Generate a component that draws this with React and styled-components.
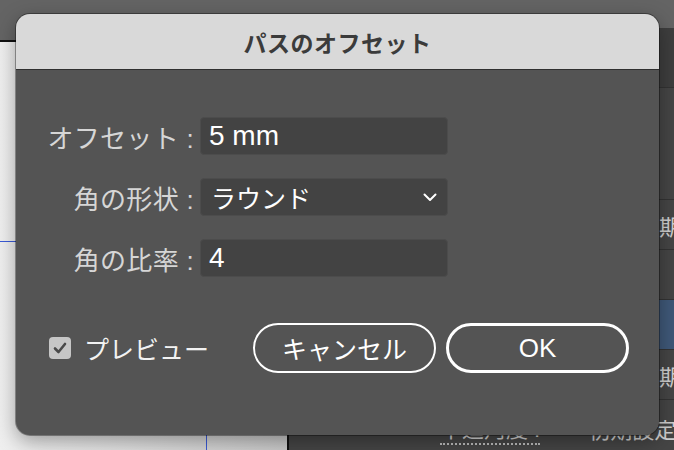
import React from "react";
import styled, { createGlobalStyle } from "styled-components";

const GlobalStyle = createGlobalStyle`
  html, body {
    margin: 0;
    padding: 0;
    background: #646464;
  }
  * {
    box-sizing: border-box;
  }
`;

const FONT = `"Liberation Sans", "Noto Sans CJK JP", sans-serif`;

const Page = styled.div`
  position: relative;
  width: 674px;
  height: 450px;
  overflow: hidden;
  background: #646464;
  font-family: ${FONT};
  display: flex;
  flex-direction: column;
`;

const TopStrip = styled.div`
  height: 40px;
  flex: none;
  background: #646464;
`;

const Workspace = styled.div`
  flex: 1;
  display: flex;
  min-width: 0;
`;

const Canvas = styled.div`
  position: relative;
  flex: none;
  width: 287px;
  border-top: 2px solid #111;
  background: linear-gradient(to right, #efefef 0%, #e2e2e2 40%, #c9c9c9 100%);
`;

const Guide = styled.div`
  position: absolute;
  background: #3b5bd6;
  ${(p) =>
    p.vertical
      ? `left: ${p.at}px; top: 0; bottom: 0; width: 1px;`
      : `top: ${p.at}px; left: 0; right: 0; height: 1px;`}
`;

const Panel = styled.div`
  flex: 1;
  min-width: 0;
  display: flex;
  flex-direction: column;
  margin-top: -12px;
  background: #3c3c3c;
  border-left: 2px solid #111;
`;

const PanelRow = styled.div`
  height: ${(p) => p.h}px;
  flex: none;
  display: flex;
  align-items: center;
  padding-left: ${(p) => p.pad || 370}px;
  gap: 48px;
  background: ${(p) => p.bg || "#454545"};
  border-bottom: 1px solid #333;
  color: #cfcfcf;
  font-size: 22px;
  white-space: nowrap;
`;

const Dotted = styled.span`
  border-bottom: 2px dotted #bbb;
`;

const Dialog = styled.div`
  position: absolute;
  left: 16px;
  top: 14px;
  width: 643px;
  height: 421px;
  border-radius: 14px;
  overflow: hidden;
  background: #545454;
  box-shadow: 0 0 0 1px rgba(0, 0, 0, 0.35), 0 6px 20px rgba(0, 0, 0, 0.35);
  display: flex;
  flex-direction: column;
`;

const TitleBar = styled.div`
  height: 56px;
  flex: none;
  display: flex;
  align-items: center;
  justify-content: center;
  background: #d9d9d9;
  border-bottom: 1px solid #2f2f2f;
  color: #3b3b3b;
  font-size: 23px;
  font-weight: 700;
  letter-spacing: 0.5px;
`;

const Body = styled.div`
  flex: 1;
  display: flex;
  flex-direction: column;
  padding: 47px 30px 60px 0;
`;

const Form = styled.div`
  display: grid;
  grid-template-columns: 178px 248px;
  column-gap: 6px;
  row-gap: 23px;
  align-items: center;
`;

const Label = styled.div`
  text-align: right;
  color: #d6d6d6;
  font-size: 26px;
  letter-spacing: 0.3px;
  white-space: nowrap;
`;

const Field = styled.div`
  height: 38px;
  display: flex;
  align-items: center;
  justify-content: space-between;
  padding: 0 10px 0 ${(p) => (p.select ? 10 : 8)}px;
  background: #434343;
  border: 1px solid #4c4c4c;
  border-radius: 4px;
  color: #ffffff;
  font-size: ${(p) => (p.select ? 25 : 28)}px;
`;

const Footer = styled.div`
  margin-top: 46px;
  display: flex;
  align-items: center;
`;

const PreviewToggle = styled.label`
  display: flex;
  align-items: center;
  gap: 13px;
  margin-left: 33px;
  color: #f2f2f2;
  font-size: 25px;
`;

const Box = styled.span`
  width: 22px;
  height: 22px;
  border-radius: 4px;
  background: #c6c6c6;
  display: flex;
  align-items: center;
  justify-content: center;
`;

const Buttons = styled.div`
  margin-left: auto;
  display: flex;
  gap: 10px;
`;

const Button = styled.button`
  width: 183px;
  height: 50px;
  border-radius: 25px;
  background: transparent;
  border: ${(p) => (p.primary ? 3 : 2)}px solid #ffffff;
  color: #ffffff;
  font-family: ${FONT};
  font-size: ${(p) => (p.primary ? 26 : 25)}px;
  display: flex;
  align-items: center;
  justify-content: center;
  padding: 0;
`;

const Chevron = () => (
  <svg width="14" height="9" viewBox="0 0 14 9">
    <polyline
      points="1.5,1.5 7,7 12.5,1.5"
      fill="none"
      stroke="#ffffff"
      strokeWidth="2"
      strokeLinecap="round"
      strokeLinejoin="round"
    />
  </svg>
);

const Check = () => (
  <svg width="14" height="12" viewBox="0 0 14 12">
    <polyline
      points="2,6.5 5.5,10 12,2"
      fill="none"
      stroke="#4a4a4a"
      strokeWidth="2.6"
      strokeLinecap="round"
      strokeLinejoin="round"
    />
  </svg>
);

const fields = [
  { label: "オフセット :", value: "5 mm" },
  { label: "角の形状 :", value: "ラウンド", select: true },
  { label: "角の比率 :", value: "4" },
];

export default function App() {
  return (
    <Page>
      <GlobalStyle />
      <TopStrip />
      <Workspace>
        <Canvas>
          <Guide at={199} />
          <Guide vertical at={206} />
        </Canvas>
        <Panel>
          <PanelRow h={60} bg="#3e3e3e" />
          <PanelRow h={112} />
          <PanelRow h={50}>期間</PanelRow>
          <PanelRow h={50} />
          <PanelRow h={50} bg="#3f5878" />
          <PanelRow h={50}>期間</PanelRow>
          <PanelRow h={56} pad={151}>
            <Dotted>十進角度 :</Dotted>
            <span>初期設定</span>
          </PanelRow>
        </Panel>
      </Workspace>

      <Dialog>
        <TitleBar>パスのオフセット</TitleBar>
        <Body>
          <Form>
            {fields.map((f) => (
              <React.Fragment key={f.label}>
                <Label>{f.label}</Label>
                <Field select={f.select}>
                  <span>{f.value}</span>
                  {f.select && <Chevron />}
                </Field>
              </React.Fragment>
            ))}
          </Form>
          <Footer>
            <PreviewToggle>
              <Box>
                <Check />
              </Box>
              プレビュー
            </PreviewToggle>
            <Buttons>
              <Button>キャンセル</Button>
              <Button primary>OK</Button>
            </Buttons>
          </Footer>
        </Body>
      </Dialog>
    </Page>
  );
}
